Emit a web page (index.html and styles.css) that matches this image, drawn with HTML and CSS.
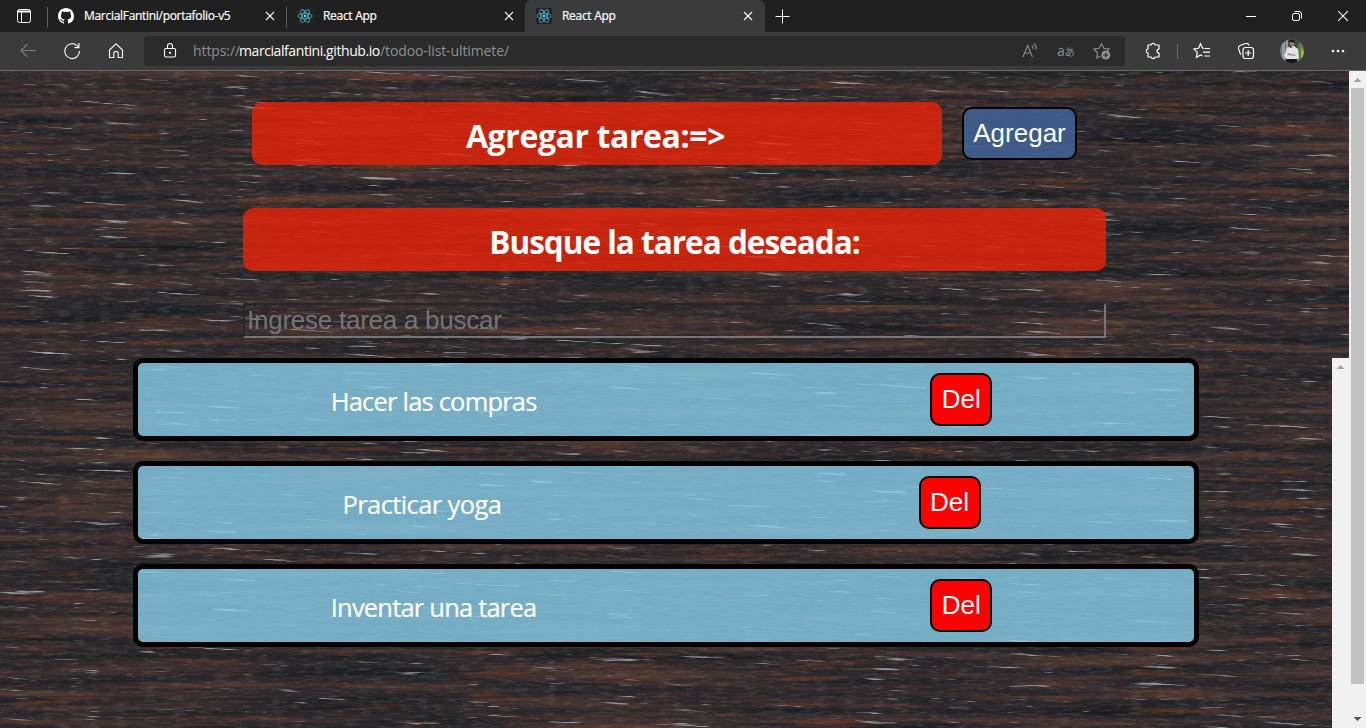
FILE: index.html
```html
<!DOCTYPE html>
<html lang="es">
<head>
<meta charset="utf-8">
<title>React App</title>
<link rel="stylesheet" href="styles.css">
</head>
<body>
<svg class="defs" width="0" height="0">
  <defs>
    <symbol id="react" viewBox="0 0 16 16">
      <rect width="16" height="16" rx="1" fill="#222528"/>
      <g fill="none" stroke="#4fa9c0" stroke-width=".9">
        <ellipse cx="8" cy="8" rx="7" ry="2.7"/>
        <ellipse cx="8" cy="8" rx="7" ry="2.7" transform="rotate(60 8 8)"/>
        <ellipse cx="8" cy="8" rx="7" ry="2.7" transform="rotate(120 8 8)"/>
      </g>
      <circle cx="8" cy="8" r="1.3" fill="#61dafb"/>
    </symbol>
    <symbol id="close" viewBox="0 0 10 10"><path d="M1 1l8 8M9 1l-8 8" stroke="#fff" stroke-width="1.2" fill="none"/></symbol>
  </defs>
</svg>
<div class="window">
  <header class="tabs">
    <div class="tab-menu">
      <svg width="16" height="16" viewBox="0 0 16 16"><rect x="1.5" y="1.5" width="13" height="13" rx="2" fill="none" stroke="#fff"/><path d="M1.5 2.5h13v2h-13z" fill="#fff"/><path d="M5.5 4v10" stroke="#fff"/></svg>
    </div>
    <div class="tab first">
      <svg class="fav" viewBox="0 0 16 16"><path fill="#fff" d="M8 0C3.58 0 0 3.58 0 8c0 3.54 2.29 6.53 5.47 7.59.4.07.55-.17.55-.38 0-.19-.01-.82-.01-1.49-2.01.37-2.53-.49-2.69-.94-.09-.23-.48-.94-.82-1.13-.28-.15-.68-.52-.01-.53.63-.01 1.08.58 1.23.82.72 1.21 1.87.87 2.33.66.07-.52.28-.87.51-1.07-1.78-.2-3.64-.89-3.64-3.95 0-.87.31-1.59.82-2.15-.08-.2-.36-1.02.08-2.12 0 0 .67-.21 2.2.82.64-.18 1.32-.27 2-.27s1.36.09 2 .27c1.53-1.04 2.2-.82 2.2-.82.44 1.1.16 1.92.08 2.12.51.56.82 1.27.82 2.15 0 3.07-1.87 3.75-3.65 3.95.29.25.54.73.54 1.48 0 1.07-.01 1.93-.01 2.2 0 .21.15.46.55.38A8.01 8.01 0 0 0 16 8c0-4.42-3.58-8-8-8z"/></svg>
      <span class="tab-title">MarcialFantini/portafolio-v5</span>
      <svg class="x"><use href="#close"/></svg>
    </div>
    <div class="tab">
      <svg class="fav"><use href="#react"/></svg>
      <span class="tab-title">React App</span>
      <svg class="x"><use href="#close"/></svg>
    </div>
    <div class="tab active">
      <svg class="fav"><use href="#react"/></svg>
      <span class="tab-title">React App</span>
      <svg class="x"><use href="#close"/></svg>
    </div>
    <svg class="plus" width="15" height="15"><path d="M7 0v14M0 7h14" transform="translate(.5 .5)" stroke="#fff" stroke-width="1"/></svg>
    <div class="controls">
      <svg width="12" height="12"><path d="M1 6.5h10" stroke="#fff"/></svg>
      <svg width="12" height="12" fill="none" stroke="#fff"><rect x="1.500" y="3.500" width="7" height="7" rx="1.500"/><path d="M3.500 1.500h4.500a2.500 2.500 0 0 1 2.500 2.500v4.500"/></svg>
      <svg width="12" height="12"><path d="M1.200 1.200l9.600 9.600M10.800 1.200l-9.600 9.600" stroke="#fff" stroke-width="1.100"/></svg>
    </div>
  </header>
  <nav class="toolbar">
    <div class="nav-icons">
      <svg width="18" height="18" viewBox="0 0 18 18" fill="none" stroke="#7d7d7d" stroke-width="1.1"><path d="M17 8.500H2M8.500 2L2 8.500 8.500 15"/></svg>
      <svg width="18" height="18" viewBox="0 0 18 18" fill="none" stroke="#f2f2f2" stroke-width="1.2"><path d="M16.500 9A7.400 7.400 0 1 1 13.500 3.200L15.700 5.400M15.900 1v4.600h-4.500"/></svg>
      <svg width="18" height="18" viewBox="0 0 18 18" fill="none" stroke="#f2f2f2" stroke-width="1.2" stroke-linejoin="round"><path d="M2.500 8L9 1.900 15.500 8v7.500h-4.300v-4a2.200 2.200 0 0 0-4.400 0v4H2.500z"/></svg>
    </div>
    <div class="address">
      <svg width="14" height="18" viewBox="0 0 14 18" fill="none" stroke="#fff" stroke-width="1.100"><rect x="1.500" y="6.500" width="11" height="8.500" rx="1.500"/><path d="M4.500 6.500V4a2.500 2.500 0 0 1 5 0v2.500"/><circle cx="7" cy="10.800" r=".6" fill="#fff"/></svg>
      <div class="url"><span class="scheme">https://</span><span class="host">marcialfantini.github.io</span><span class="path">/todoo-list-ultimete/</span></div>
      <div class="address-icons">
        <svg width="18" height="18" viewBox="0 0 18 18" fill="none" stroke="#8e8e8e" stroke-width="1.100"><path d="M2 15L6.700 3.500 11.400 15M3.700 11h6M11 3.500a4 4 0 0 1 1.200 3.500M13 1.500a6 6 0 0 1 2 6"/></svg>
        <span class="translate">a<small>あ</small></span>
        <svg width="19" height="18" viewBox="0 0 19 18" fill="none" stroke="#8e8e8e" stroke-width="1.200"><path d="M8.500 1.500l2.300 4.800 5.200.7-2.300 2.300M7.500 14l-3.700 2 .8-5.200L.9 7l5.300-.7 2.300-4.800"/><circle cx="12.800" cy="13" r="4.500" fill="#929292" stroke="none"/><path d="M10.300 13h5M12.800 10.500v5" stroke="#2b2b2b"/></svg>
      </div>
    </div>
    <div class="actions">
      <svg width="18" height="18" viewBox="0 0 18 18" fill="none" stroke="#fff" stroke-width="1.200" stroke-linejoin="round"><path d="M4 3h3a2.200 2.200 0 0 1 4.200 0H15v4.100a2 2 0 0 0 0 4V15h-3.800a2.200 2.200 0 0 1-4.200 0H4v-3.800a2.200 2.200 0 0 1 0-4.300z"/></svg>
      <i class="divider"></i>
      <svg width="18" height="18" viewBox="0 0 18 18" fill="none" stroke="#fff" stroke-width="1.200"><path d="M11 6.500L9.500 6 7.500 1.800 5.500 6.300l-4.700.6 3.500 3.400-.9 5L7.500 13l2 1M11.500 6.500H17M10 10.200h7M11.500 14H17"/></svg>
      <svg class="collections" width="18" height="18" viewBox="0 0 18 18" fill="none" stroke="#fff" stroke-width="1.200"><rect x="6" y="5.500" width="10.500" height="11" rx="2.500"/><path d="M11.200 8v6M8.200 11h6M4 12.500C2.500 11.500 3 10 2 8 .8 5.500 1.500 4.300 3 3.500l5.500-2C10 1 11.500 1.500 12.300 3.500"/></svg>
      <svg class="avatar" width="24" height="24" viewBox="0 0 24 24"><clipPath id="ac"><circle cx="12" cy="12" r="12"/></clipPath><g clip-path="url(#ac)"><path fill="#66777c" d="M0 0h24v24H0z"/><path fill="#8d9f9f" d="M2 3h3v18H2zM6 0h2v16H6z"/><path fill="#344b48" d="M8 0h12v14H8z"/><path fill="#567b45" d="M18 3l6 8v12l-6-5z"/><path fill="#95ba35" d="M21 8l3 5v7h-3z"/><path fill="#e4e2e5" d="M7 9l4-2h3l4 3 1 9-3 2H7l-3-4z"/><path fill="#9b9aa2" d="M8 14l8 2-1 1-8-1z"/><circle cx="12" cy="4.500" r="2.500" fill="#a5705f"/><path fill="#161618" d="M9 3q1-3 5-2l1 3-3-1zM10 7l3 1-3 1zM6 20h11v4H6z"/></g></svg>
      <svg class="more" width="16" height="4"><g fill="#fff"><circle cx="3" cy="2" r="1.300"/><circle cx="8" cy="2" r="1.300"/><circle cx="13" cy="2" r="1.300"/></g></svg>
    </div>
  </nav>
  <div class="viewport">
    <main class="page">
      <svg class="wood" width="1349" height="657" aria-hidden="true">
        <filter id="grain" x="0" y="0" width="100%" height="100%" color-interpolation-filters="sRGB">
          <feTurbulence type="fractalNoise" baseFrequency=".004 .11" numOctaves="5" seed="8"/>
          <feColorMatrix values="1.3 .3 0 0 -.3  1.3 .3 0 0 -.3  1.3 .3 0 0 -.3  0 0 0 0 1"/>
          <feComponentTransfer>
            <feFuncR type="table" tableValues=".10 .115 .135 .155 .18 .22 .26 .30 .36"/>
            <feFuncG type="table" tableValues=".10 .12 .14 .15 .16 .18 .20 .22 .25"/>
            <feFuncB type="table" tableValues=".11 .135 .155 .165 .17 .18 .19 .19 .20"/>
          </feComponentTransfer>
        </filter>
        <filter id="ember" x="0" y="0" width="100%" height="100%" color-interpolation-filters="sRGB">
          <feTurbulence type="fractalNoise" baseFrequency=".009 .16" numOctaves="4" seed="31"/>
          <feColorMatrix values="0 0 0 0 .42  0 0 0 0 .22  0 0 0 0 .15  5 0 0 0 -2.95"/>
        </filter>
        <filter id="scratch" x="0" y="0" width="100%" height="100%" color-interpolation-filters="sRGB">
          <feTurbulence type="fractalNoise" baseFrequency=".015 .36" numOctaves="3" seed="12"/>
          <feColorMatrix values="0 0 0 0 .62  0 0 0 0 .64  0 0 0 0 .66  0 9 0 0 -6.15"/>
        </filter>
        <filter id="fiber" x="0" y="0" width="100%" height="100%" color-interpolation-filters="sRGB">
          <feTurbulence type="fractalNoise" baseFrequency=".07 .4" numOctaves="3" seed="5"/>
          <feColorMatrix values="0 0 0 0 .5  0 0 0 0 .47  0 0 0 0 .46  0 0 1.600 0 -.75"/>
        </filter>
        <rect width="1349" height="657" filter="url(#grain)"/>
        <rect width="1349" height="657" filter="url(#ember)" opacity=".6"/>
        <rect width="1349" height="657" filter="url(#fiber)" opacity=".5"/>
        <g transform="rotate(3 674 328)"><rect x="-30" y="-50" width="1410" height="757" filter="url(#scratch)" opacity=".9"/></g>
      </svg>
      <div class="content">
        <section class="add-row">
          <h1 class="banner"><span class="t-add">Agregar tarea:=&gt;</span></h1>
          <button class="btn add">Agregar</button>
        </section>
        <section class="search">
          <h1 class="banner"><span class="t-search">Busque la tarea deseada:</span></h1>
          <input class="field" placeholder="Ingrese tarea a buscar">
        </section>
        <section class="list-area">
          <ul class="list">
            <li class="task"><p class="t1">Hacer las compras</p><button class="btn del">Del</button></li>
            <li class="task"><p class="t2">Practicar yoga</p><button class="btn del">Del</button></li>
            <li class="task"><p class="t1">Inventar una tarea</p><button class="btn del">Del</button></li>
          </ul>
          <div class="bar"><i class="up"></i></div>
        </section>
      </div>
    </main>
    <div class="bar outer"><i class="up"></i><i class="thumb"></i><i class="down"></i></div>
  </div>
</div>
</body>
</html>
```

FILE: styles.css
```css
* { box-sizing: border-box; }
body { margin: 0; overflow: hidden; font-family: "Open Sans", "Noto Sans", sans-serif; }
svg { display: block; flex: none; }
.defs { position: absolute; }
.window { width: 1366px; height: 728px; display: flex; flex-direction: column; overflow: hidden; }

.tabs { height: 32px; flex: none; background: #202020; display: flex; align-items: center; }
.tab-menu { width: 47px; padding-left: 16px; }
.tab { width: 239px; height: 32px; display: flex; align-items: center; padding: 0 11px 0 11px; }
.tab.first, .tab:nth-child(3) { background: linear-gradient(#606060, #606060) 0 7px / 1px 20px no-repeat; }
.tab.active { background: #3b3b3b; border-radius: 6px 6px 0 0; width: 240px; padding-right: 12px; }
.fav { width: 16px; height: 16px; }
.tab-title { margin-left: 10px; flex: 1; font: 12px/16px "Open Sans", sans-serif; color: #fff; letter-spacing: -.3px; white-space: nowrap; -webkit-text-stroke: .2px #fff; }
.x { width: 10px; height: 10px; }
.plus { margin-left: 10px; width: 15px; height: 15px; }
.controls { margin-left: auto; display: flex; gap: 34px; padding-right: 17px; }

.toolbar { height: 39px; flex: none; background: #3b3b3b; border-bottom: 1px solid #6a6a6a; display: flex; align-items: center; }
.nav-icons { width: 144px; display: flex; gap: 26px; padding-left: 19px; }
.address { width: 981px; height: 30px; background: #2b2b2b; border-radius: 4px; display: flex; align-items: center; padding: 0 13px 0 19px; }
.url { margin-left: 16px; flex: 1; font-size: 14px; line-height: 20px; display: flex; color: #8f8f8f; white-space: nowrap; letter-spacing: -.1px; }
.scheme { width: 46px; }
.host { color: #fff; width: 141px; letter-spacing: -.42px; }
.address-icons { display: flex; align-items: center; gap: 18px; color: #8e8e8e; }
.translate { font: 14px/18px "Open Sans", "Noto Sans CJK JP", sans-serif; width: 18px; letter-spacing: 0; white-space: nowrap; }
.translate small { font-size: 10px; }
.actions { flex: 1; display: flex; align-items: center; padding-left: 19px; }
.divider { width: 1px; height: 15px; background: #6a6a6a; margin: 0 15px 0 15px; }
.collections { margin-left: 26px; }
.avatar { margin-left: 25px; }
.more { margin-left: 26px; }

.viewport { flex: 1; display: flex; min-height: 0; }
.page { width: 1349px; position: relative; overflow: hidden; background: #2b2728; }
.wood { position: absolute; inset: 0; }
.content { position: relative; height: 100%; display: flex; flex-direction: column; padding-top: 31px; }
.add-row { display: flex; align-items: center; gap: 20px; margin-left: 252px; height: 63px; }
.banner { margin: 0; width: 863px; height: 63px; border-radius: 10px; background: rgba(231, 35, 9, .82); color: #fff; font-size: 32px; font-weight: 700; line-height: 67px; text-align: center; white-space: nowrap; }
.add-row .banner { width: 690px; padding-right: 3px; }
.t-add { letter-spacing: -.4px; }
.t-search { font-size: 31.5px; letter-spacing: -1px; }
.btn { height: 53px; border: 2px solid #000; border-radius: 10px; color: #fff; font: 26px/30px "Liberation Sans", Arial, sans-serif; padding: 0 0 2px; text-align: center; }
.btn.add { width: 115px; background: rgba(64, 97, 148, .88); }
.btn.del { width: 62px; background: #f00; }
.search { margin: 43px 0 0 243px; width: 863px; }
.field { display: block; width: 863px; height: 35px; margin-top: 32px; padding: 1px 2px; background: transparent; border: 2px solid; border-color: #262727 #767676 #767676 #262727; font: 26px/29px "Liberation Sans", Arial, sans-serif; letter-spacing: -.25px; }
.field::placeholder { color: #757575; opacity: 1; }
.list-area { flex: 1; margin-top: 20px; display: flex; min-height: 0; }
.list { flex: 1; margin: 0; list-style: none; padding: 0 133px; display: flex; flex-direction: column; gap: 20px; }
.task { height: 83px; border: 5px solid #000; border-radius: 10px; background: rgba(135, 206, 235, .8); display: flex; justify-content: space-around; align-items: center; padding-right: 9px; }
.task p { margin: 2px 9px 0 0; font-size: 25.5px; line-height: 36px; color: #fff; white-space: nowrap; letter-spacing: -.8px; -webkit-text-stroke: .2px #fff; }
.t1 { width: 205px; }
.t2 { width: 158px; }
.task .t2 { letter-spacing: -.6px; }

.bar { width: 17px; flex: none; background: #f1f1f1; display: flex; flex-direction: column; align-items: center; }
.up, .down { width: 8px; height: 4px; background: #a3a3a3; clip-path: polygon(50% 0, 100% 100%, 0 100%); margin-top: 7px; flex: none; }
.outer .thumb { width: 13px; height: 596px; background: #c1c1c1; margin-top: 6px; }
.outer .down { background: #505050; clip-path: polygon(0 0, 100% 0, 50% 100%); margin-top: 33px; }
```
